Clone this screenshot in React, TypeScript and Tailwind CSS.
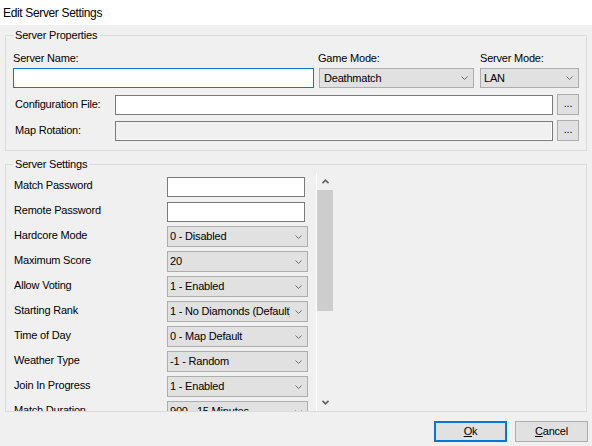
import React from 'react';

type Row =
  | { label: string; kind: 'text' }
  | { label: string; kind: 'select'; value: string };

const rows: Row[] = [
  { label: 'Match Password', kind: 'text' },
  { label: 'Remote Password', kind: 'text' },
  { label: 'Hardcore Mode', kind: 'select', value: '0 - Disabled' },
  { label: 'Maximum Score', kind: 'select', value: '20' },
  { label: 'Allow Voting', kind: 'select', value: '1 - Enabled' },
  { label: 'Starting Rank', kind: 'select', value: '1 - No Diamonds (Default)' },
  { label: 'Time of Day', kind: 'select', value: '0 - Map Default' },
  { label: 'Weather Type', kind: 'select', value: '-1 - Random' },
  { label: 'Join In Progress', kind: 'select', value: '1 - Enabled' },
  { label: 'Match Duration', kind: 'select', value: '900 - 15 Minutes' },
];

function Chevron() {
  return (
    <svg width="7" height="4" viewBox="0 0 7 4" className="block">
      <polyline points="0.5,0.5 3.5,3.5 6.5,0.5" fill="none" stroke="#6d6d6d" strokeWidth="1" />
    </svg>
  );
}

function Combo({ value, className, padLeft = 'pl-[2px]' }: { value: string; className: string; padLeft?: string }) {
  return (
    <div className={`flex items-center bg-[#e1e1e1] border border-[#adadad] ${className}`}>
      <span className={`flex-1 min-w-0 overflow-hidden whitespace-nowrap leading-[13px] ${padLeft}`}>{value}</span>
      <span className="w-[17px] h-full flex items-center justify-center shrink-0">
        <Chevron />
      </span>
    </div>
  );
}

function BrowseButton() {
  return (
    <button className="w-[22px] h-[21px] ml-[4px] bg-[#e1e1e1] border border-[#adadad] flex items-center justify-center leading-[13px] pb-[2px]">
      ...
    </button>
  );
}

function ScrollArrow({ up }: { up?: boolean }) {
  return (
    <div className="h-[17px] flex items-center justify-center">
      <svg width="7" height="5" viewBox="0 0 7 5">
        <polyline
          points={up ? '0.5,4.2 3.5,1.2 6.5,4.2' : '0.5,0.8 3.5,3.8 6.5,0.8'}
          fill="none"
          stroke="#606060"
          strokeWidth="1.6"
        />
      </svg>
    </div>
  );
}

export default function App() {
  return (
    <div className="w-[592px] h-[446px] bg-[#f0f0f0] text-black text-[11px] tracking-[-0.2px] font-['Liberation_Sans',Arial,sans-serif] flex flex-col overflow-hidden select-none">
      <div className="h-[25px] bg-white flex items-center pl-[3px] text-[12px] tracking-[-0.35px] shrink-0">
        Edit Server Settings
      </div>

      <div className="px-[5px] flex flex-col">
        <fieldset className="border border-[#dcdcdc] mt-[4px] pl-[7px] pr-[6px] pb-[9px]">
          <legend className="pl-[2px] pr-[2px] leading-[13px]">Server Properties</legend>
          <div className="grid grid-cols-[301px_155px_100px] gap-x-[5px] mt-[10px]">
            <div className="flex flex-col">
              <span className="leading-[13px]">Server Name:</span>
              <div className="mt-[3px] h-[20px] bg-white border border-[#0078d7]" />
            </div>
            <div className="flex flex-col">
              <span className="leading-[13px] -ml-[1px]">Game Mode:</span>
              <Combo value="Deathmatch" className="mt-[3px] h-[20px]" padLeft="pl-[4px]" />
            </div>
            <div className="flex flex-col ml-[1px]">
              <span className="leading-[13px]">Server Mode:</span>
              <Combo value="LAN" className="mt-[3px] h-[20px]" padLeft="pl-[3px]" />
            </div>
          </div>

          <div className="flex items-center h-[21px] mt-[6px] mr-[1px]">
            <span className="w-[100px] ml-[2px] leading-[13px] shrink-0">Configuration File:</span>
            <div className="flex-1 h-[20px] mt-[1px] bg-white border border-[#7a7a7a]" />
            <BrowseButton />
          </div>
          <div className="flex items-center h-[21px] mt-[5px] mr-[1px]">
            <span className="w-[100px] ml-[2px] leading-[13px] shrink-0">Map Rotation:</span>
            <div className="flex-1 h-[20px] mt-[1px] bg-[#f0f0f0] border border-[#7a7a7a] shadow-[inset_-1px_-1px_0_#ffffff]" />
            <BrowseButton />
          </div>
        </fieldset>

        <fieldset className="border border-[#dcdcdc] mt-[7px]">
          <legend className="ml-[7px] pl-[2px] pr-[2px] leading-[13px]">Server Settings</legend>
          <div className="flex h-[238px] mt-[2px]">
            <div className="w-[310px] h-full overflow-hidden pl-[8px] pt-[4px]">
              {rows.map((row) => (
                <div key={row.label} className="flex items-start h-[25px]">
                  <span className="w-[153px] pt-[2px] leading-[13px] shrink-0 whitespace-nowrap">{row.label}</span>
                  {row.kind === 'text' ? (
                    <div className="w-[138px] h-[20px] bg-white border border-[#7a7a7a]" />
                  ) : (
                    <Combo value={row.value} className="w-[141px] h-[21px] -mt-[1px]" />
                  )}
                </div>
              ))}
            </div>
            <div className="w-[17px] h-full border-l border-white flex flex-col">
              <ScrollArrow up />
              <div className="flex-1 flex flex-col">
                <div className="h-[121px] bg-[#cdcdcd]" />
              </div>
              <ScrollArrow />
            </div>
          </div>
        </fieldset>

        <div className="flex justify-end gap-[8px] mt-[9px] mr-[-1px]">
          <button className="w-[73px] h-[21px] bg-[#e1e1e1] border-2 border-[#0078d7] flex items-center justify-center leading-[13px]">
            <span>
              <span className="underline underline-offset-[1px]">O</span>k
            </span>
          </button>
          <button className="w-[73px] h-[21px] bg-[#e1e1e1] border border-[#adadad] flex items-center justify-center leading-[13px]">
            <span>
              <span className="underline underline-offset-[1px]">C</span>ancel
            </span>
          </button>
        </div>
      </div>
    </div>
  );
}
